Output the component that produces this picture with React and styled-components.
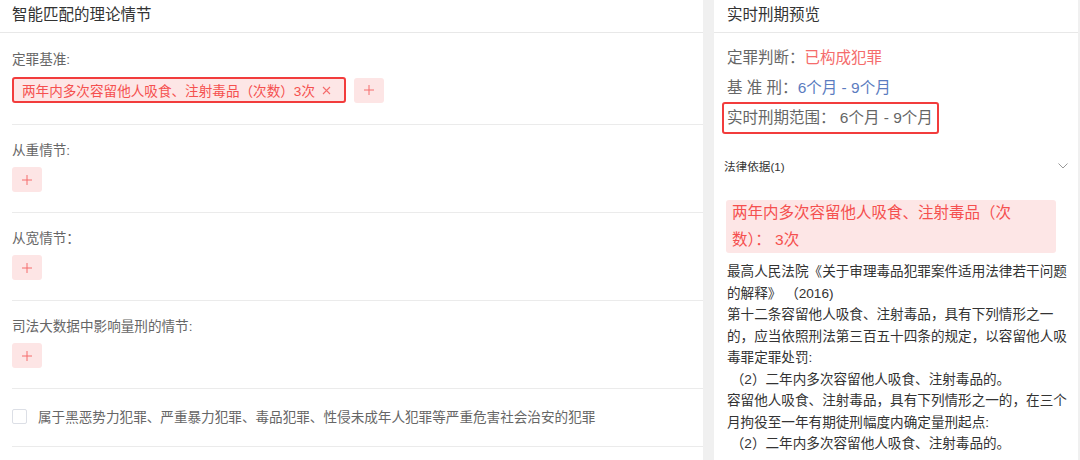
import styled, { createGlobalStyle } from 'styled-components'

const GlobalStyle = createGlobalStyle`
    html, body {
        margin: 0;
        padding: 0;
        background: #fff;
    }
    body {
        font-family: "Liberation Sans", "Noto Sans CJK SC", sans-serif;
        color: #333;
    }
`

const Page = styled.div`
    display: flex;
    gap: 11px;
    height: 460px;
    overflow: hidden;
    background: #f0f0f0;
    padding-right: 2px;
`

const Panel = styled.div`
    background: #fff;
    width: ${(props) => props.width}px;
    flex-shrink: 0;
    overflow: hidden;
`

const PanelHeader = styled.div`
    height: 32px;
    line-height: 30px;
    padding-left: ${(props) => props.pad || 12}px;
    font-size: 15.5px;
    color: #333;
    border-bottom: 1px solid #e8e8e8;
`

const Sections = styled.div`
    padding-left: 12px;
`

const Section = styled.div`
    padding: ${(props) => (props.first ? '17px 0 21px' : '16px 0 20px')};
    border-bottom: 1px solid #ebebeb;
`

const Label = styled.div`
    font-size: 13.6px;
    line-height: 20px;
    color: #666;
    margin-bottom: ${(props) => (props.first ? 7 : 6)}px;
`

const TagRow = styled.div`
    display: flex;
    align-items: center;
    gap: 8px;
`

const Tag = styled.div`
    display: flex;
    align-items: center;
    height: 26px;
    box-sizing: border-box;
    padding: 0 13px 0 8px;
    background: #fde6e6;
    border: 2px solid #f23c3c;
    border-radius: 3px;
    color: #f5504f;
    font-size: 13.6px;
    white-space: nowrap;
`

const Close = styled.span`
    display: flex;
    margin-left: 7px;
`

const AddButton = styled.div`
    width: 30px;
    height: 25px;
    border-radius: 3px;
    background: #fde5e5;
    display: flex;
    align-items: center;
    justify-content: center;
`

const CheckRow = styled.div`
    display: flex;
    align-items: center;
    height: 58px;
    padding-bottom: 3px;
    box-sizing: border-box;
    border-bottom: 1px solid #ebebeb;
    font-size: 13.6px;
    color: #666;
`

const CheckBox = styled.span`
    width: 15px;
    height: 15px;
    box-sizing: border-box;
    border: 1px solid #dcdfe6;
    border-radius: 2px;
    background: #fff;
    margin-right: 11px;
`

const Body = styled.div`
    display: flex;
    flex-direction: column;
    padding: 14px 6px 0 13px;
`

const InfoRow = styled.div`
    font-size: 15.5px;
    line-height: 22px;
    color: #666;
    margin-bottom: 8px;
    white-space: nowrap;
`

const Value = styled.span`
    color: ${(props) => props.color};
`

const Highlight = styled.div`
    align-self: flex-start;
    margin: -5px 0 0 -5px;
    padding: 3px 4px 3px 3px;
    border: 2px solid #f23c3c;
    border-radius: 3px;
    font-size: 15.5px;
    line-height: 22px;
    color: #666;
    white-space: nowrap;
`

const CollapseHead = styled.div`
    display: flex;
    align-items: center;
    justify-content: space-between;
    height: 48px;
    margin: 8px 0 0 -3px;
    padding-right: 4px;
    font-size: 11.6px;
    color: #333;
`

const Reason = styled.div`
    width: 294px;
    margin: 10px 0 0 -1px;
    padding: 0 30px 0 6px;
    background: #fde6e6;
    border-radius: 3px;
    color: #f5504f;
    font-size: 15.5px;
    line-height: 26.5px;
`

const LawText = styled.div`
    margin-top: 8px;
    font-size: 13.6px;
    line-height: 21.5px;
    color: #333;
    width: 345px;
`

const Plus = () => (
    <svg width="12" height="12" viewBox="0 0 12 12">
        <path d="M6 1v10M1 6h10" stroke="#f56c6c" strokeWidth="1" fill="none" />
    </svg>
)

const Cross = () => (
    <svg width="9" height="9" viewBox="0 0 9 9">
        <path d="M1 1l7 7M8 1l-7 7" stroke="#f56c6c" strokeWidth="1.1" fill="none" />
    </svg>
)

const Chevron = () => (
    <svg width="10" height="6" viewBox="0 0 10 6">
        <path d="M0.5 0.5L5 5L9.5 0.5" stroke="#999" strokeWidth="1" fill="none" />
    </svg>
)

const sections = ['从重情节:', '从宽情节：', '司法大数据中影响量刑的情节:']

const App = () => (
    <>
        <GlobalStyle />
        <Page>
            <Panel width={703}>
                <PanelHeader>智能匹配的理论情节</PanelHeader>
                <Sections>
                    <Section first>
                        <Label first>定罪基准:</Label>
                        <TagRow>
                            <Tag>
                                两年内多次容留他人吸食、注射毒品（次数）3次
                                <Close>
                                    <Cross />
                                </Close>
                            </Tag>
                            <AddButton>
                                <Plus />
                            </AddButton>
                        </TagRow>
                    </Section>
                    {sections.map((title) => (
                        <Section key={title}>
                            <Label>{title}</Label>
                            <AddButton>
                                <Plus />
                            </AddButton>
                        </Section>
                    ))}
                    <CheckRow>
                        <CheckBox />
                        属于黑恶势力犯罪、严重暴力犯罪、毒品犯罪、性侵未成年人犯罪等严重危害社会治安的犯罪
                    </CheckRow>
                </Sections>
            </Panel>
            <Panel width={364}>
                <PanelHeader pad={13}>实时刑期预览</PanelHeader>
                <Body>
                    <InfoRow>
                        定罪判断：<Value color="#f56c6c">已构成犯罪</Value>
                    </InfoRow>
                    <InfoRow>
                        基 准 刑：<Value color="#5b7cc0">6个月 - 9个月</Value>
                    </InfoRow>
                    <Highlight>实时刑期范围：&nbsp;6个月 - 9个月</Highlight>
                    <CollapseHead>
                        <span>法律依据(1)</span>
                        <Chevron />
                    </CollapseHead>
                    <Reason>两年内多次容留他人吸食、注射毒品（次数）：&nbsp;3次</Reason>
                    <LawText>
                        最高人民法院《关于审理毒品犯罪案件适用法律若干问题的解释》&nbsp;（2016)
                        <br />
                        第十二条容留他人吸食、注射毒品，具有下列情形之一的，应当依照刑法第三百五十四条的规定，以容留他人吸毒罪定罪处罚:
                        <br />
                        &nbsp;（2）二年内多次容留他人吸食、注射毒品的。
                        <br />
                        容留他人吸食、注射毒品，具有下列情形之一的，在三个月拘役至一年有期徒刑幅度内确定量刑起点:
                        <br />
                        &nbsp;（2）二年内多次容留他人吸食、注射毒品的。
                    </LawText>
                </Body>
            </Panel>
        </Page>
    </>
)

export default App
